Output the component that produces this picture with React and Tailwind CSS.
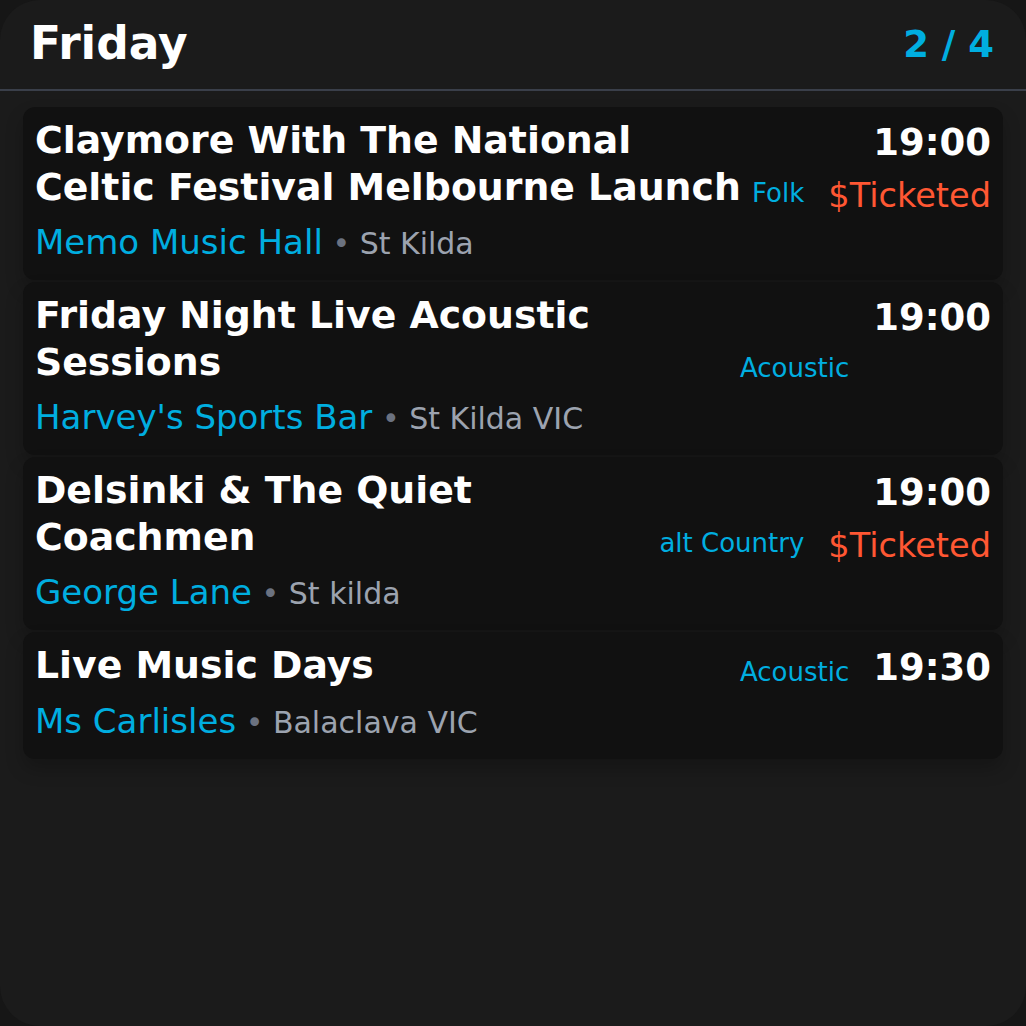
import React from "react";

const events = [
  {
    title: "Claymore With The National Celtic Festival Melbourne Launch",
    genre: "Folk",
    time: "19:00",
    price: "$Ticketed",
    venue: "Memo Music Hall",
    suburb: "St Kilda",
  },
  {
    title: "Friday Night Live Acoustic Sessions",
    genre: "Acoustic",
    time: "19:00",
    venue: "Harvey's Sports Bar",
    suburb: "St Kilda VIC",
  },
  {
    title: "Delsinki & The Quiet Coachmen",
    genre: "alt Country",
    time: "19:00",
    price: "$Ticketed",
    venue: "George Lane",
    suburb: "St kilda",
  },
  {
    title: "Live Music Days",
    genre: "Acoustic",
    time: "19:30",
    venue: "Ms Carlisles",
    suburb: "Balaclava VIC",
  },
];

function EventCard({ ev }) {
  return (
    <div className="rounded-xl bg-[#111111] px-3 pt-[10px] pb-[8px] shadow-[0_10px_18px_rgba(0,0,0,0.22)]">
      {/* Top row */}
      <div className="flex">
        <div className="min-w-0 flex-1 text-[37.8px] font-bold leading-[47px] text-white">
          {ev.title}
        </div>
        <div className="ml-1 shrink-0 self-end text-[26px] leading-[36px] text-[#00aee0]">
          {ev.genre}
        </div>
        <div className="ml-6 flex shrink-0 flex-col items-end self-start">
          <div className="mt-[4px] text-[37px] font-bold leading-[44px] text-white">
            {ev.time}
          </div>
          {ev.price && (
            <div className="mt-[16px] text-[33.6px] leading-[30px] text-[#ff5733]">
              {ev.price}
            </div>
          )}
        </div>
      </div>

      {/* Venue */}
      <div className="mt-[3px] text-[34px] leading-[56px]">
        <span className="text-[#00aee0]">{ev.venue}</span>
        <span className="text-[30px] text-[#9ca3af]">
          {" "}
          <span className="text-[#6b7280]">•</span> {ev.suburb}
        </span>
      </div>
    </div>
  );
}

export default function App() {
  return (
    <div
      className="min-h-screen bg-[#161616]"
      style={{ fontFamily: "'DejaVu Sans', sans-serif" }}
    >
      <div className="h-[1026px] w-full overflow-hidden rounded-[40px] bg-[#1b1b1b]">
        {/* Header */}
        <div className="flex h-[91px] items-center justify-between border-b-2 border-[#3a3f4a] pl-[30px] pr-[32px]">
          <h1 className="text-[45.5px] font-bold text-white">Friday</h1>
          <span className="text-[37px] font-bold text-[#00aee0]">2 / 4</span>
        </div>

        {/* Event list */}
        <div className="flex flex-col gap-[2px] px-[23px] pt-[16px]">
          {events.map((ev, i) => (
            <EventCard key={i} ev={ev} />
          ))}
        </div>
      </div>
    </div>
  );
}
